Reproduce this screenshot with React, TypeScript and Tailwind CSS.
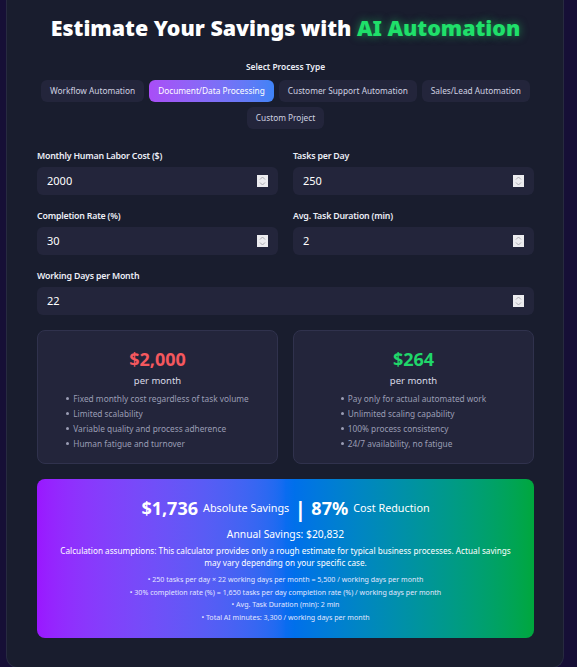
import { useState } from "react";

const processTypes = [
  "Workflow Automation",
  "Document/Data Processing",
  "Customer Support Automation",
  "Sales/Lead Automation",
  "Custom Project",
];

const humanPoints = [
  "Fixed monthly cost regardless of task volume",
  "Limited scalability",
  "Variable quality and process adherence",
  "Human fatigue and turnover",
];

const aiPoints = [
  "Pay only for actual automated work",
  "Unlimited scaling capability",
  "100% process consistency",
  "24/7 availability, no fatigue",
];

function Spinner() {
  return (
    <div className="flex h-[12px] w-[11px] shrink-0 flex-col items-center justify-between bg-[#ececef] py-[1px]">
      <svg width="7" height="4" viewBox="0 0 7 4" fill="none">
        <path d="M1 3.5L3.5 1L6 3.5" stroke="#a4a4aa" strokeWidth="0.9" />
      </svg>
      <svg width="7" height="4" viewBox="0 0 7 4" fill="none">
        <path d="M1 0.5L3.5 3L6 0.5" stroke="#a4a4aa" strokeWidth="0.9" />
      </svg>
    </div>
  );
}

function Field({ label, value, className = "" }: { label: string; value: number; className?: string }) {
  return (
    <div className={`flex flex-col ${className}`}>
      <label className="mb-[4px] text-[8.8px] font-semibold leading-[14px] tracking-[-0.2px] text-[#eceef6]">{label}</label>
      <div className="flex h-[28px] items-center rounded-md bg-[#23253b] pl-[10px] pr-[10px]">
        <input
          type="text"
          defaultValue={value}
          className="min-w-0 flex-1 bg-transparent text-[11px] text-white outline-none"
        />
        <Spinner />
      </div>
    </div>
  );
}

function CostCard({ price, color, points }: { price: string; color: string; points: string[] }) {
  return (
    <div className="flex flex-col items-center rounded-lg border border-[#30324d] bg-[#23253b] pt-[16px] pb-[12px]">
      <div className={`text-[18px] font-bold leading-[24px] ${color}`}>{price}</div>
      <div className="mt-[3px] text-[9.5px] leading-[14px] text-[#d9dae6]">per month</div>
      <ul className="mt-[3px] text-left">
        {points.map((p) => (
          <li key={p} className="flex items-center text-[8.3px] leading-[15px] text-[#9a9db4]">
            <span className="mr-[4px] inline-block h-[3px] w-[3px] rounded-full bg-[#9a9db4]" />
            {p}
          </li>
        ))}
      </ul>
    </div>
  );
}

export default function App() {
  const [selected, setSelected] = useState(1);

  return (
    <div className="min-h-screen bg-[#160f36] pl-[6px] pr-[13px] font-['Noto_Sans',sans-serif]">
      <div className="rounded-b-xl border-x border-b border-[#272a40] bg-[#191d2e] pl-[30px] pr-[29px] pt-[12px] pb-[29px]">
        <h1 className="text-center text-[21.4px] font-black leading-[32px] text-white">
          Estimate Your Savings with{" "}
          <span className="text-[#1fe06a] [text-shadow:0_0_8px_rgba(34,224,106,0.55)]">AI Automation</span>
        </h1>

        <div className="mt-[16px] text-center text-[8.4px] font-semibold leading-[14px] text-[#eceef6]">Select Process Type</div>
        <div className="mt-[6px] flex flex-wrap justify-center gap-[5px]">
          {processTypes.map((t, i) => (
            <button
              key={t}
              onClick={() => setSelected(i)}
              className={`h-[22px] rounded-md px-[9px] text-[8.3px] leading-[22px] ${
                selected === i
                  ? "bg-gradient-to-r from-[#a94df7] to-[#3e83f6] text-white"
                  : "bg-[#23253b] text-[#cfd1e0]"
              }`}
            >
              {t}
            </button>
          ))}
        </div>

        <div className="mt-[20px] grid grid-cols-2 gap-x-[15px] gap-y-[14px]">
          <Field label="Monthly Human Labor Cost ($)" value={2000} />
          <Field label="Tasks per Day" value={250} />
          <Field label="Completion Rate (%)" value={30} />
          <Field label="Avg. Task Duration (min)" value={2} />
          <Field label="Working Days per Month" value={22} className="col-span-2" />
        </div>

        <div className="mt-[15px] grid grid-cols-2 gap-[15px]">
          <CostCard price="$2,000" color="text-[#f5585e]" points={humanPoints} />
          <CostCard price="$264" color="text-[#20d66a]" points={aiPoints} />
        </div>

        <div className="mt-[15px] rounded-lg bg-gradient-to-r from-[#9a17ff] via-[#0a6cf0] to-[#00a73c] px-[20px] pt-[14px] pb-[15px] text-center text-white">
          <div className="flex items-center justify-center leading-[30px]">
            <span className="text-[18px] font-bold">$1,736</span>
            <span className="ml-[5px] text-[10.8px]">Absolute Savings</span>
            <span className="mx-[5px] text-[22px] font-bold leading-[24px]">|</span>
            <span className="text-[18px] font-bold">87%</span>
            <span className="ml-[5px] text-[10.8px]">Cost Reduction</span>
          </div>
          <div className="mt-[3px] text-[10.3px] leading-[16px]">Annual Savings: $20,832</div>
          <p className="mx-auto mt-[3px] max-w-[462px] text-[8.2px] leading-[12px]">
            Calculation assumptions: This calculator provides only a rough estimate for typical business processes. Actual savings may vary depending on your specific case.
          </p>
          <div className="mt-[4px] text-[7.1px] leading-[12.5px] text-[#e3e6ff]">
            <div>• 250 tasks per day × 22 working days per month = 5,500 / working days per month</div>
            <div>• 30% completion rate (%) = 1,650 tasks per day completion rate (%) / working days per month</div>
            <div>• Avg. Task Duration (min): 2 min</div>
            <div>• Total AI minutes: 3,300 / working days per month</div>
          </div>
        </div>
      </div>
    </div>
  );
}
